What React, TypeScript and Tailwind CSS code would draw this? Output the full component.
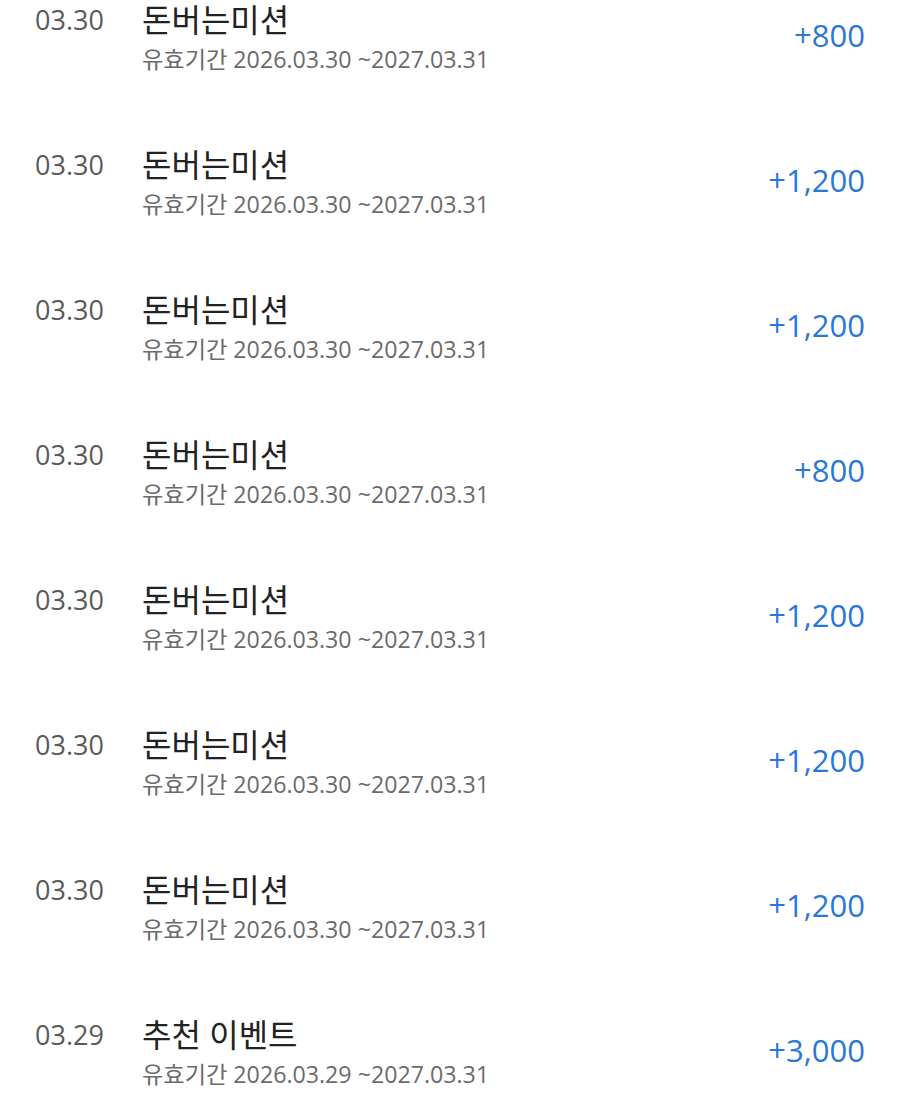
import React from 'react';

interface Point {
  date: string;
  title: string;
  from: string;
  amount: string;
}

const points: Point[] = [
  { date: '03.30', title: '돈버는미션', from: '2026.03.30', amount: '+800' },
  { date: '03.30', title: '돈버는미션', from: '2026.03.30', amount: '+1,200' },
  { date: '03.30', title: '돈버는미션', from: '2026.03.30', amount: '+1,200' },
  { date: '03.30', title: '돈버는미션', from: '2026.03.30', amount: '+800' },
  { date: '03.30', title: '돈버는미션', from: '2026.03.30', amount: '+1,200' },
  { date: '03.30', title: '돈버는미션', from: '2026.03.30', amount: '+1,200' },
  { date: '03.30', title: '돈버는미션', from: '2026.03.30', amount: '+1,200' },
  { date: '03.29', title: '추천 이벤트', from: '2026.03.29', amount: '+3,000' },
];

function PointRow({ point }: { point: Point }) {
  return (
    <div className="flex items-center h-[145px] pt-[36px] pb-[36px] pr-[35px]">
      <div className="flex items-start flex-1">
        <div className="w-[142px] shrink-0 pl-[35px] text-[27px] leading-[36px] text-[#5a5a5a]">
          {point.date}
        </div>
        <div className="flex flex-col">
          <div className="text-[32px] leading-[36px] text-[#222222]">{point.title}</div>
          <div className="mt-[6px] text-[23.2px] leading-[30px] text-[#6b6b6b]">
            유효기간 {point.from} ~2027.03.31
          </div>
        </div>
      </div>
      <div className="pb-[6px] text-[31px] leading-[36px] text-[#2b78d4]">{point.amount}</div>
    </div>
  );
}

export default function App() {
  return (
    <div
      className="w-[900px] h-[1110px] overflow-hidden bg-white"
      style={{ fontFamily: '"Open Sans", "Noto Sans CJK KR", sans-serif' }}
    >
      <div className="-mt-[35px]">
        {points.map((p, i) => (
          <PointRow key={i} point={p} />
        ))}
      </div>
    </div>
  );
}
